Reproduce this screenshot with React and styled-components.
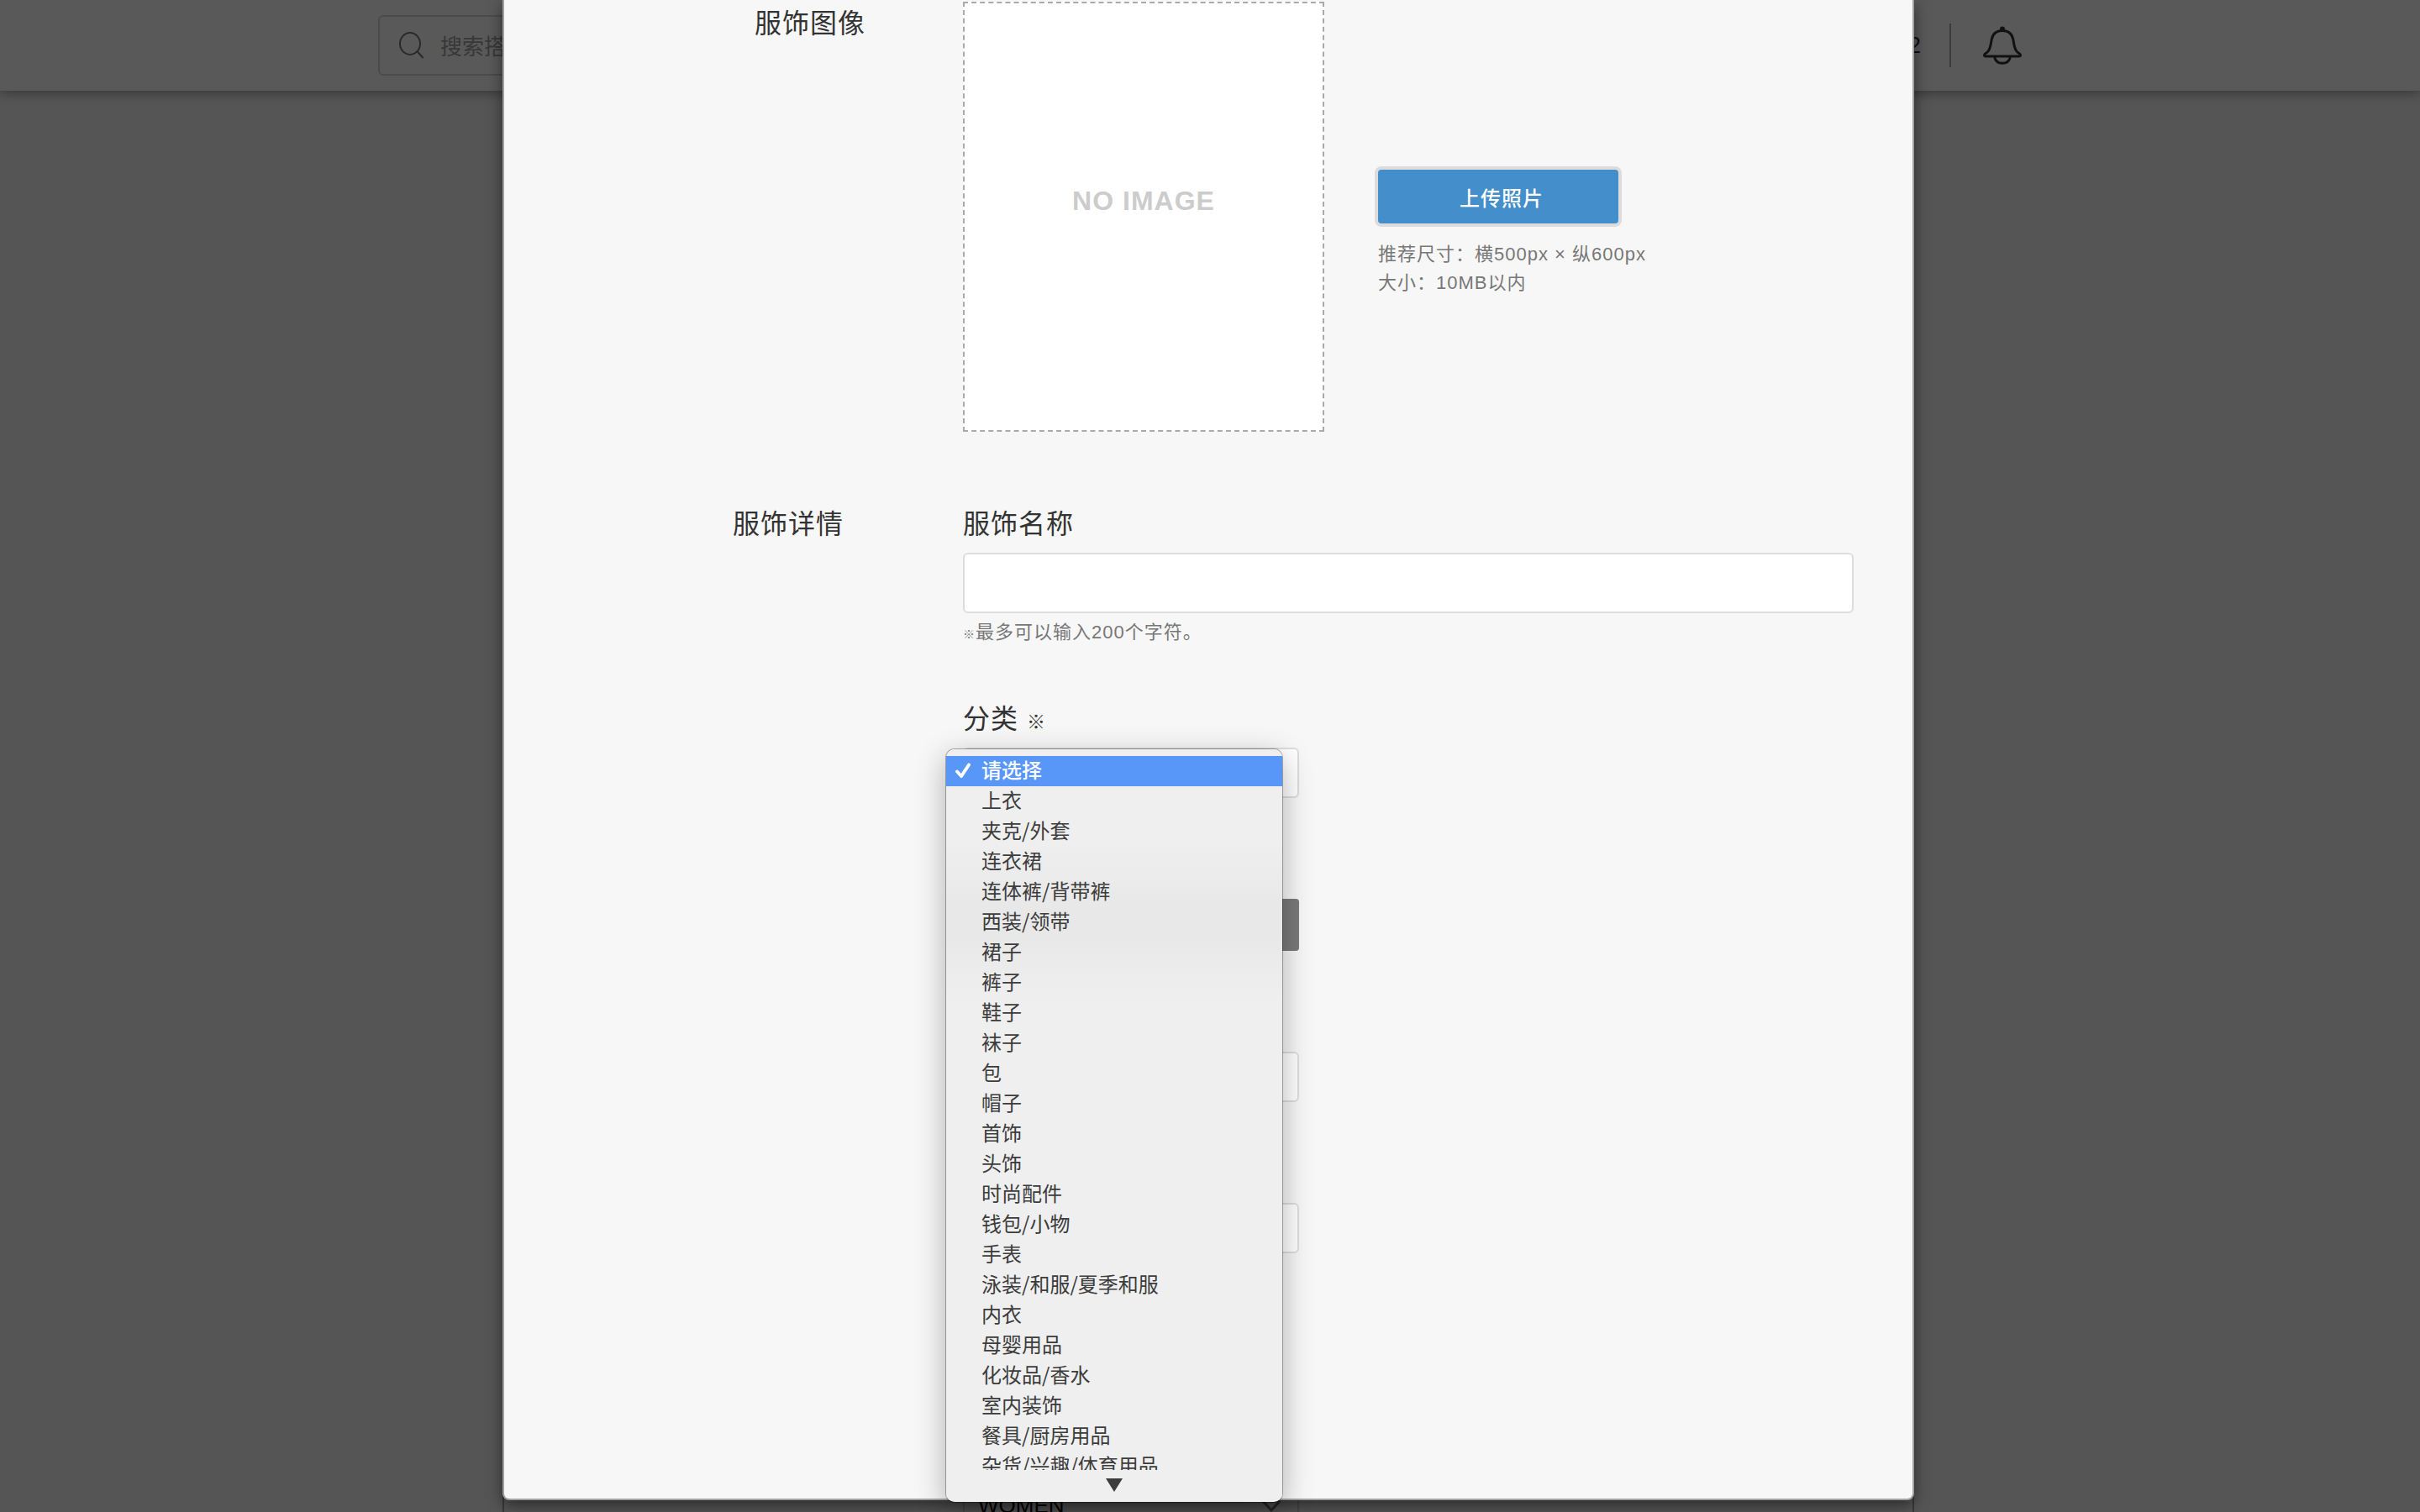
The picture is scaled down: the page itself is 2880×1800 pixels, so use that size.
import React from 'react';
import styled, { createGlobalStyle } from 'styled-components';

const Global = createGlobalStyle`
  *, *::before, *::after { box-sizing: border-box; }
  body {
    margin: 0;
    color: #333;
    background: #f3f3f3;
    font-family: "Liberation Sans", "Noto Sans CJK SC", sans-serif;
    font-size: 24px;
  }
  button, input, select { font: inherit; letter-spacing: inherit; color: inherit; }
`;

const Shell = styled.div`
  position: relative;
  height: 100vh;
  overflow: hidden;
`;

const Header = styled.header`
  background: #fff;
  box-shadow: 0 2px 14px rgba(0, 0, 0, 0.4);
`;

const HeaderInner = styled.div`
  display: flex;
  align-items: center;
  justify-content: space-between;
  width: 100%;
  max-width: 1980px;
  height: 108px;
  margin: 0 auto;
`;

const SearchBox = styled.label`
  display: flex;
  align-items: center;
  gap: 20px;
  width: 600px;
  height: 72px;
  padding: 0 22px;
  border: 2px solid #d6d6d6;
  border-radius: 6px;
`;

const SearchInput = styled.input`
  flex: 1;
  min-width: 0;
  padding: 4px 0 0;
  border: 0;
  outline: 0;
  background: transparent;
  font-size: 26px;
  line-height: 40px;
  &::placeholder { color: #a0a0a0; opacity: 1; }
`;

const HeaderTools = styled.div`
  display: flex;
  align-items: center;
  padding-right: 24px;
  font-size: 28px;
`;

const Divider = styled.span`
  width: 2px;
  height: 52px;
  margin: 0 38px 0 34px;
  background: #aaa;
`;

const IconButton = styled.button`
  display: flex;
  padding: 0;
  border: 0;
  background: transparent;
`;

const Panel = styled.main`
  width: 1680px;
  max-width: 100%;
  margin: 0 auto;
  padding: calc(100vh - 146px) 70px 0 546px;
  border: solid #a4a4a4;
  border-width: 0 2px;
`;

const Gutter = styled.div`
  padding-right: 4px;
`;

const Select = styled.select`
  display: block;
  width: 400px;
  height: 60px;
  padding: 0 16px;
  appearance: none;
  border: 2px solid #ddd;
  border-radius: 6px;
  background: #fff;
`;

const PageSelectWrap = styled.div`
  position: relative;
  width: 400px;
`;

const PageSelect = styled(Select)`
  background: transparent;
  border-color: #d0d0d0;
  color: #000;
  font-size: 26px;
`;

const SelectArrow = styled.svg`
  position: absolute;
  right: 22px;
  top: 24px;
`;

const Overlay = styled.div`
  position: absolute;
  inset: 0;
  padding-right: 4px;
  background: rgba(0, 0, 0, 0.65);
`;

const Modal = styled.section`
  width: 1680px;
  max-width: 100%;
  margin: 0 auto;
  padding: 2px 70px 292px 0;
  border: 2px solid #a0a0a0;
  border-top: 0;
  border-radius: 0 0 8px 8px;
  background: #f7f7f7;
  box-shadow: 0 6px 18px rgba(0, 0, 0, 0.5);
  letter-spacing: 1px;
`;

const Form = styled.form`
  display: flex;
  flex-direction: column;
  gap: 84px;
`;

const Row = styled.div`
  display: grid;
  grid-template-columns: 546px 1fr;
`;

const RowTitle = styled.h2`
  margin: 0;
  padding-right: ${(p) => p.$inset}px;
  text-align: right;
  font-size: 32px;
  font-weight: 400;
  line-height: 52px;
`;

const Upload = styled.div`
  display: flex;
  gap: 64px;
`;

const ImageBox = styled.div`
  display: flex;
  align-items: center;
  justify-content: center;
  width: 430px;
  height: 512px;
  padding-bottom: 38px;
  border: 2px dashed #aaa;
  background: #fff;
  color: #ccc;
  font-size: 32px;
  font-weight: 700;
`;

const UploadSide = styled.div`
  padding-top: 200px;
`;

const UploadButton = styled.button`
  display: block;
  width: 286px;
  height: 64px;
  margin-bottom: 20px;
  padding: 0 0 0 8px;
  border: 0;
  border-radius: 4px;
  background: #448ecb;
  box-shadow: 0 0 0 4px #dcdcdc;
  color: #fff;
  font-weight: 500;
`;

const Hint = styled.p`
  margin: 0;
  color: #777;
  font-size: 22px;
  line-height: 34px;
`;

const Mark = styled.span`
  font-size: ${(p) => (p.$small ? 14 : 22)}px;
  font-weight: 700;
  line-height: 1;
`;

const Fields = styled.div`
  display: flex;
  flex-direction: column;
  gap: 60px;
`;

const FieldLabel = styled.label`
  display: block;
  height: 52px;
  margin-bottom: 8px;
  font-size: 32px;
  line-height: 52px;
`;

const TextInput = styled.input`
  display: block;
  width: 100%;
  height: 72px;
  margin-bottom: 6px;
  padding: 0 18px;
  border: 2px solid #ddd;
  border-radius: 6px;
  background: #fff;
`;

const Controls = styled.div`
  display: flex;
  flex-direction: column;
  gap: 120px;
`;

const Anchor = styled.div`
  position: relative;
  width: 400px;
`;

const DarkButton = styled.button`
  width: 400px;
  height: 62px;
  border: 0;
  border-radius: 4px;
  background: #7a7a7a;
`;

const Menu = styled.div`
  position: absolute;
  z-index: 1;
  top: 2px;
  left: -20px;
  width: 400px;
  padding-top: 8px;
  border-radius: 10px;
  background: linear-gradient(#efefef 110px, #e8e8e8 190px, #e8e8e8 220px, #efefef 300px);
  box-shadow: 0 0 0 1px rgba(0, 0, 0, 0.3), 0 10px 36px rgba(0, 0, 0, 0.3);
  letter-spacing: normal;
`;

const MenuList = styled.ul`
  height: 850px;
  margin: 0;
  padding: 0;
  overflow: hidden;
  list-style: none;
  font-family: "Noto Sans CJK SC", sans-serif;
`;

const MenuItem = styled.li`
  display: grid;
  grid-template-columns: 32px 1fr;
  align-items: center;
  height: 36px;
  padding: 0 0 4px 10px;
  line-height: 32px;
  color: ${(p) => (p.$active ? '#fff' : '#3c3c3c')};
  background: ${(p) => (p.$active ? '#5897f7' : 'transparent')};
  font-weight: ${(p) => (p.$active ? 500 : 400)};
`;

const MenuMore = styled.div`
  display: flex;
  justify-content: center;
  height: 38px;
  padding-top: 10px;
`;

const categories = [
  '请选择', '上衣', '夹克/外套', '连衣裙', '连体裤/背带裤', '西装/领带', '裙子', '裤子',
  '鞋子', '袜子', '包', '帽子', '首饰', '头饰', '时尚配件', '钱包/小物', '手表',
  '泳装/和服/夏季和服', '内衣', '母婴用品', '化妆品/香水', '室内装饰', '餐具/厨房用品',
  '杂货/兴趣/体育用品',
];

function SearchIcon() {
  return (
    <svg width="30" height="32" viewBox="0 0 30 32" fill="none" stroke="#777" strokeWidth="2" strokeLinecap="round">
      <ellipse cx="14" cy="14" rx="12" ry="13" />
      <path d="M22.500 23 29 30.500" />
    </svg>
  );
}

function BellIcon() {
  return (
    <svg width="46" height="46" viewBox="0 0 46 46" fill="none" stroke="#333" strokeWidth="3" strokeLinejoin="round">
      <path d="M23 5.5c-7 0-11.500 4-12.800 10.500C9 22 9 27.500 5 31.200c-1.500 1.300-3.500 1.800-3.500 3.300 0 1 .8 1.500 1.800 1.500h39.400c1 0 1.800-.5 1.800-1.500 0-1.500-2-2-3.500-3.300C37 27.500 37 22 35.800 16 34.500 9.500 30 5.500 23 5.500Z" />
      <path d="M13.500 36.500c1 5 4.800 7.800 9.500 7.800s8.500-2.800 9.500-7.800" />
      <circle cx="23" cy="3.500" r="3" fill="#333" stroke="none" />
    </svg>
  );
}

function CategoryMenu() {
  return (
    <Menu>
      <MenuList role="listbox" aria-label="分类">
        {categories.map((name, i) => (
          <MenuItem key={name} role="option" aria-selected={i === 0} $active={i === 0}>
            <span>
              {i === 0 && (
                <svg width="20" height="20" viewBox="0 0 20 20" fill="none" stroke="#fff" strokeWidth="4" strokeLinecap="round" strokeLinejoin="round" style={{ display: 'block' }}>
                  <path d="m3 12.500 5 5.500L17 4.500" />
                </svg>
              )}
            </span>
            {name}
          </MenuItem>
        ))}
      </MenuList>
      <MenuMore>
        <svg width="20" height="16" viewBox="0 0 20 16"><path d="M0 0h20L10 16Z" fill="#3c3c3c" /></svg>
      </MenuMore>
    </Menu>
  );
}

export default function App() {
  return (
    <Shell>
      <Global />
      <Header>
        <HeaderInner>
          <SearchBox>
            <SearchIcon />
            <SearchInput type="text" placeholder="搜索搭配" aria-label="搜索搭配" />
          </SearchBox>
          <HeaderTools>
            <span>2</span>
            <Divider />
            <IconButton type="button" aria-label="通知"><BellIcon /></IconButton>
          </HeaderTools>
        </HeaderInner>
      </Header>
      <Gutter>
        <Panel>
          <PageSelectWrap>
            <PageSelect aria-label="性别"><option>WOMEN</option></PageSelect>
            <SelectArrow width="22" height="14" viewBox="0 0 22 14" fill="none" stroke="#777" strokeWidth="3">
              <path d="m1 1 10 11L21 1" />
            </SelectArrow>
          </PageSelectWrap>
        </Panel>
      </Gutter>

      <Overlay>
        <Modal role="dialog" aria-label="服饰详情">
          <Form onSubmit={(e) => e.preventDefault()}>
            <Row>
              <RowTitle $inset={116}>服饰图像</RowTitle>
              <Upload>
                <ImageBox>NO IMAGE</ImageBox>
                <UploadSide>
                  <UploadButton type="button">上传照片</UploadButton>
                  <Hint>推荐尺寸：横500px × 纵600px</Hint>
                  <Hint>大小：10MB以内</Hint>
                </UploadSide>
              </Upload>
            </Row>
            <Row>
              <RowTitle $inset={142}>服饰详情</RowTitle>
              <Fields>
                <div>
                  <FieldLabel htmlFor="item-name">服饰名称</FieldLabel>
                  <TextInput id="item-name" type="text" />
                  <Hint><Mark $small>※</Mark>最多可以输入200个字符。</Hint>
                </div>
                <div>
                  <FieldLabel htmlFor="item-category">分类 <Mark>※</Mark></FieldLabel>
                  <Controls>
                    <Anchor>
                      <Select id="item-category" />
                      <CategoryMenu />
                    </Anchor>
                    <DarkButton type="button" aria-label="品牌" />
                    <Select aria-label="颜色" />
                    <Select aria-label="尺码" />
                  </Controls>
                </div>
              </Fields>
            </Row>
          </Form>
        </Modal>
      </Overlay>
    </Shell>
  );
}
